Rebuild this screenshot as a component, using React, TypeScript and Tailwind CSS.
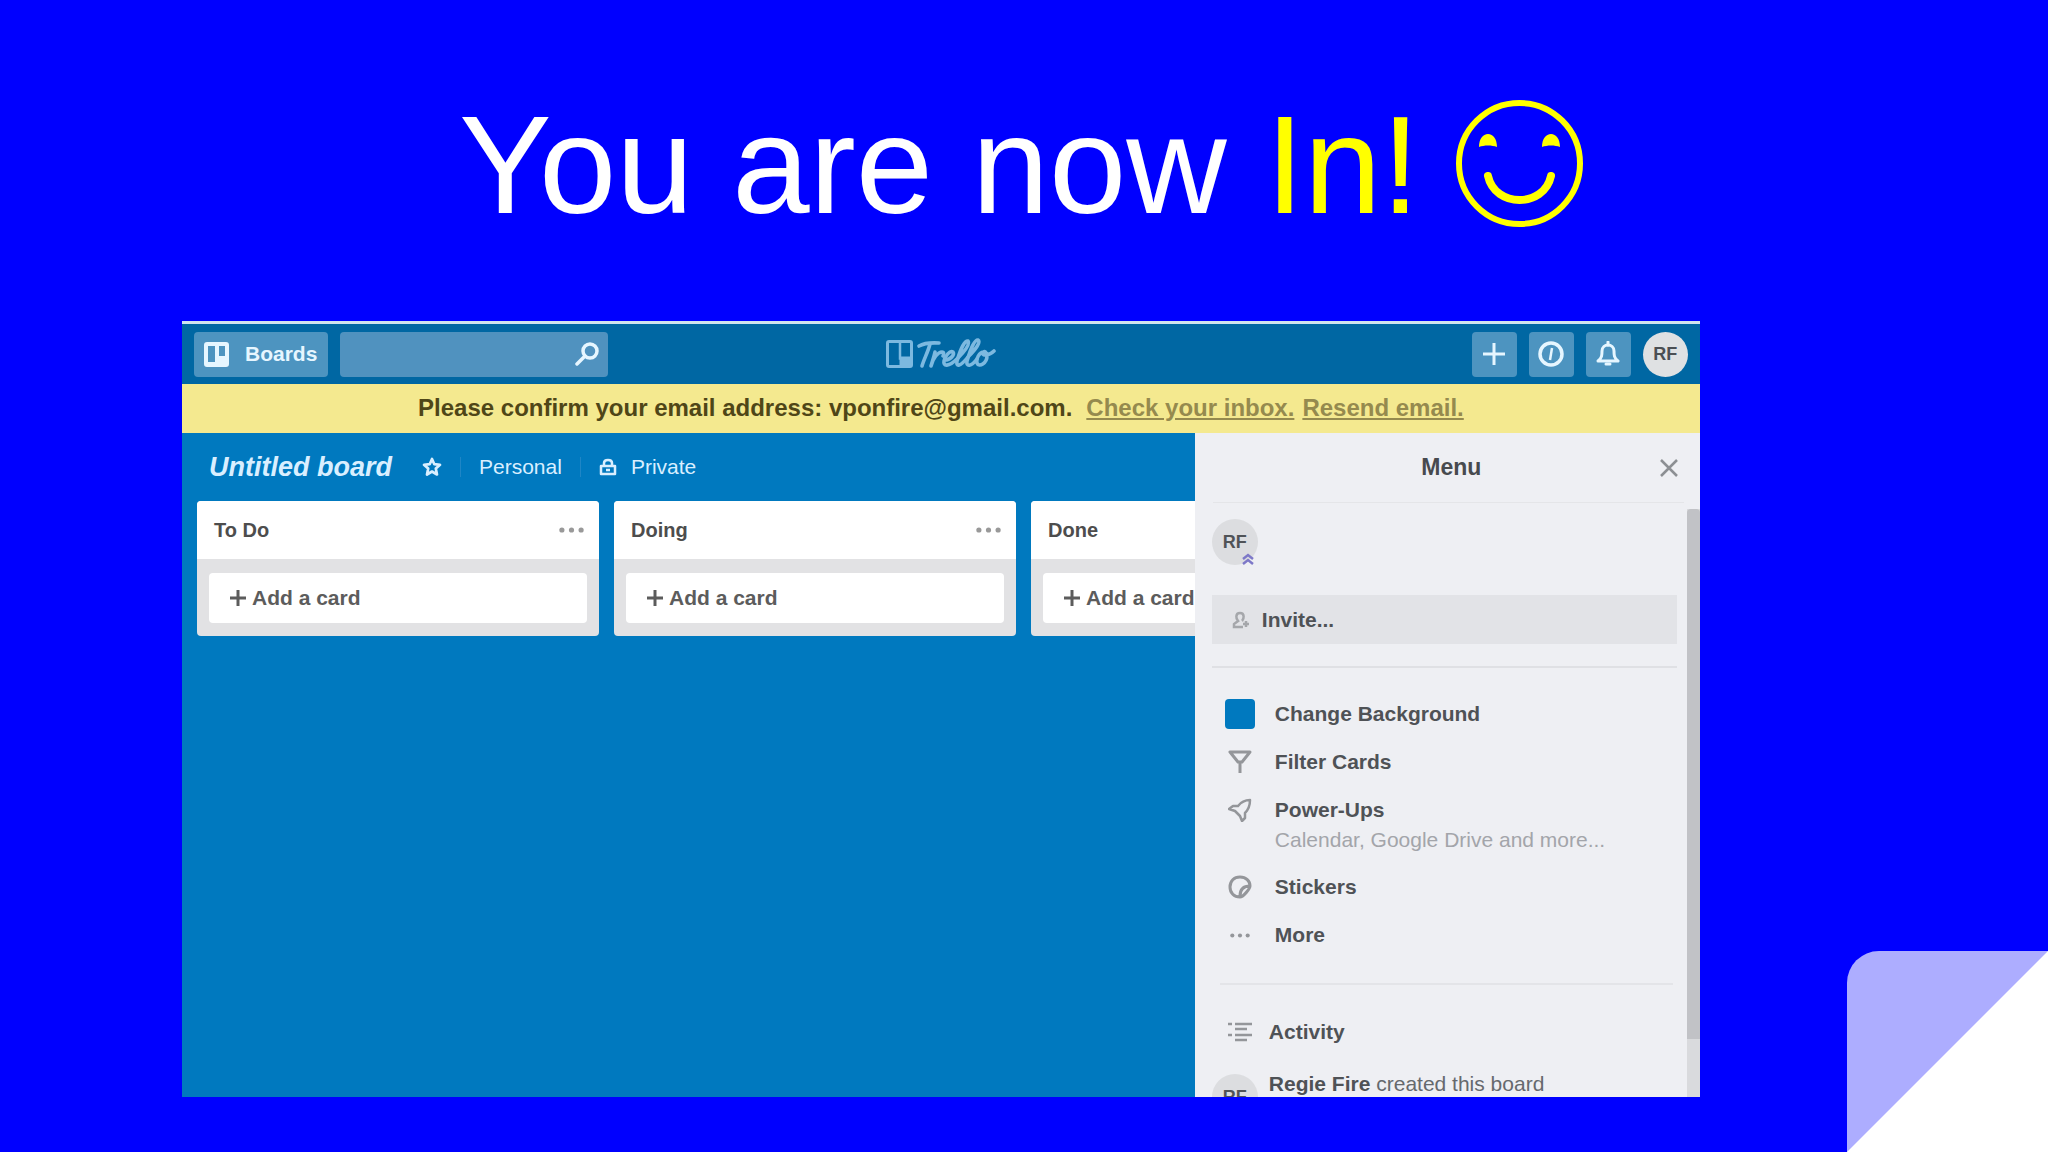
import type { ReactNode } from "react";

const LISTS = ["To Do", "Doing", "Done"];

function Dots({ className }: { className: string }) {
  return (
    <svg viewBox="0 0 26 6" className={className} fill="currentColor" aria-hidden="true">
      <circle cx="3" cy="3" r="2.700" />
      <circle cx="13" cy="3" r="2.700" />
      <circle cx="23" cy="3" r="2.700" />
    </svg>
  );
}

function BoardsIcon() {
  return (
    <svg viewBox="0 0 25 25" className="size-[25px]" aria-hidden="true">
      <path
        fill="currentColor"
        fillRule="evenodd"
        d="M3 0h19a3 3 0 0 1 3 3v19a3 3 0 0 1-3 3H3a3 3 0 0 1-3-3V3a3 3 0 0 1 3-3zM4 4v16h7V4zM15 4v10h6V4z"
      />
    </svg>
  );
}

function TrelloLogo() {
  return (
    <a href="#" aria-label="Trello" className="text-[#7cb9e0]">
      <svg viewBox="0 0 110 32" className="h-8 w-[110px]" fill="none" aria-hidden="true">
        <rect x="1.5" y="3.5" width="24" height="25" rx="1.5" stroke="currentColor" strokeWidth="3" />
        <path d="M14 3.500v17h11" stroke="currentColor" strokeWidth="2.500" />
        <path d="M13.500 18.500h12v10h-12z" fill="currentColor" />
        <g stroke="currentColor" strokeWidth="3.600" strokeLinecap="round" strokeLinejoin="round">
          <path d="M33 8C38 5 45 4.500 53 5" />
          <path d="M44 6C42 14 38 21 36 28" />
          <path d="M49 14C48 19 46 24 45 28C47 20 52 14 56 14C58 14 58 16 57 18" />
          <path d="M59 22C64 22 69 17 67 14C64 12 59 18 58 23C57 28 62 30 72 20" />
          <path d="M72 20C79 13 84 6 82 3C78 2 73 16 71 23C70 29 74 29 82 19" />
          <path d="M82 19C90 11 95 4 92 2C88 1 83 16 81 23C80 29 85 29 91 21" />
          <path d="M98 14C93 14 90 21 91 25C93 30 101 25 101 18C101 14 98 12 97 15C96 18 103 18 108 13" />
        </g>
      </svg>
    </a>
  );
}

function Star() {
  return (
    <svg viewBox="0 0 20 20" className="size-5" fill="none" stroke="currentColor" strokeWidth="2.700" strokeLinejoin="round" aria-hidden="true">
      <path d="M10 2l2.300 5.200 5.700.6-4.200 3.800 1.200 5.900-5-3-5 3 1.200-5.900L2 7.800l5.700-.6z" />
    </svg>
  );
}

function HeaderButton({ label, children }: { label: string; children: ReactNode }) {
  return (
    <button aria-label={label} className="flex size-[45px] items-center justify-center rounded bg-[#4d94c0] text-[#e6f6ff]">
      {children}
    </button>
  );
}

function TopBar() {
  return (
    <header className="grid h-[60px] shrink-0 grid-cols-[1fr_auto_1fr] items-center bg-[#0067a3] px-3">
      <div className="flex gap-3">
        <button className="flex h-[45px] w-[134px] items-center gap-4 rounded bg-[#4d94c0] pl-[10px] text-[21px] font-bold text-[#e6f6ff]">
          <BoardsIcon />
          Boards
        </button>
        <label className="flex h-[45px] w-[268px] items-center rounded bg-[#5092bf] pr-[9px] text-[#e6f6ff]">
          <input type="text" aria-label="Search" className="min-w-0 flex-1 bg-transparent px-3 text-[21px] outline-none" />
          <svg viewBox="0 0 24 24" className="size-6" fill="none" stroke="currentColor" strokeWidth="3.500" strokeLinecap="round" aria-hidden="true">
            <circle cx="15" cy="9" r="7" />
            <path d="M10 14l-8 8" />
          </svg>
        </label>
      </div>
      <TrelloLogo />
      <div className="flex justify-end gap-3">
        <HeaderButton label="Create">
          <svg viewBox="0 0 22 22" className="size-[22px]" stroke="currentColor" strokeWidth="3" aria-hidden="true">
            <path d="M11 0v22M0 11h22" />
          </svg>
        </HeaderButton>
        <HeaderButton label="Information">
          <svg viewBox="0 0 26 26" className="size-[26px]" fill="none" stroke="currentColor" aria-hidden="true">
            <circle cx="13" cy="13" r="11" strokeWidth="3.500" />
            <path d="M14 7l-2 12" strokeWidth="2.500" />
          </svg>
        </HeaderButton>
        <HeaderButton label="Notifications">
          <svg viewBox="0 0 24 26" className="h-[26px] w-6" fill="none" stroke="currentColor" strokeWidth="3" strokeLinejoin="round" aria-hidden="true">
            <path d="M2 20c4-3 4-6 4-10 0-4 3-6 6-6s6 2 6 6c0 4 0 7 4 10z" />
            <path d="M12 1v3M10 23h4" strokeLinecap="round" />
          </svg>
        </HeaderButton>
        <button className="size-[45px] rounded-full bg-[#dfe1e3] text-[18px] font-bold text-[#4b4f54]">RF</button>
      </div>
    </header>
  );
}

function BoardList({ name }: { name: string }) {
  return (
    <section className="w-[402px] shrink-0 overflow-hidden rounded bg-[#e2e2e4]">
      <div className="flex h-[58px] items-center justify-between bg-white pr-[15px] pl-[17px]">
        <h2 className="text-[20px] font-bold text-[#4d4d4d]">{name}</h2>
        <button aria-label={`${name} list actions`} className="text-[#999]">
          <Dots className="h-[6px] w-[25px]" />
        </button>
      </div>
      <div className="px-3 pt-[14px] pb-[13px]">
        <button className="flex h-[50px] w-full items-center gap-[6px] rounded-sm bg-white pl-[21px] text-[21px] font-bold text-[#5c5c5c]">
          <svg viewBox="0 0 16 16" className="size-4" stroke="currentColor" strokeWidth="3" aria-hidden="true">
            <path d="M8 0v16M0 8h16" />
          </svg>
          Add a card
        </button>
      </div>
    </section>
  );
}

function Board() {
  return (
    <main className="min-w-0 flex-1 overflow-hidden">
      <div className="flex h-[68px] items-center px-[27px] text-[21px] text-[#d9efff]">
        <h1 className="text-[27px] font-bold italic">Untitled board</h1>
        <button aria-label="Star board" className="ml-[30px]">
          <Star />
        </button>
        <span className="ml-[18px] h-5 w-px bg-[#1f86c6]" />
        <button className="ml-[18px]">Personal</button>
        <span className="ml-[18px] h-5 w-px bg-[#1f86c6]" />
        <button className="ml-[18px] flex items-center gap-[14px]">
          <svg viewBox="0 0 18 18" className="size-[18px]" fill="none" stroke="currentColor" strokeWidth="2.500" strokeLinejoin="round" aria-hidden="true">
            <path d="M2 8h14v8H2zM5 8V5c0-4 8-4 8 0v3M7 12h4" />
          </svg>
          Private
        </button>
      </div>
      <div className="flex gap-[15px] pl-[15px]">
        {LISTS.map((name) => (
          <BoardList key={name} name={name} />
        ))}
      </div>
    </main>
  );
}

function MenuRow({ icon, children }: { icon: ReactNode; children: ReactNode }) {
  return (
    <li>
      <button className="flex h-12 w-full items-center text-[21px] font-bold text-[#4f5256]">
        <span className="mr-[19px] flex w-8 justify-center text-[#94969a]">{icon}</span>
        {children}
      </button>
    </li>
  );
}

function Menu() {
  return (
    <aside className="flex w-[505px] shrink-0 flex-col overflow-hidden bg-[#eeeff3]">
      <div className="mr-4 ml-[18px] grid h-[70px] grid-cols-[30px_1fr_24px] items-center border-b border-[#e4e5e8]">
        <h2 className="col-start-2 text-center text-[23px] font-bold text-[#474a4e]">Menu</h2>
        <button aria-label="Close menu" className="text-[#8c8f93]">
          <svg viewBox="0 0 18 18" className="size-[18px]" stroke="currentColor" strokeWidth="2.500" aria-hidden="true">
            <path d="M1 1l16 16M17 1L1 17" />
          </svg>
        </button>
      </div>
      <div className="flex min-h-0 flex-1">
        <div className="min-w-0 flex-1 pt-4 pr-[10px] pl-[17px]">
          <div className="relative size-[46px]">
            <button className="size-[46px] rounded-full bg-[#dcdde0] text-[18px] font-bold text-[#505357]">RF</button>
            <svg viewBox="0 0 12 12" className="absolute right-1 bottom-0 size-3" fill="none" stroke="#7d78c8" strokeWidth="2.500" aria-hidden="true">
              <path d="M1 6l5-4 5 4M1 11l5-4 5 4" />
            </svg>
          </div>
          <button className="mt-[30px] flex h-[49px] w-full items-center gap-3 bg-[#e2e3e7] pl-5 text-[21px] font-bold text-[#4f5256]">
            <svg viewBox="0 0 18 18" className="size-[18px]" fill="none" stroke="#a5a7ab" strokeWidth="2.500" aria-hidden="true">
              <path d="M10 10c2-2 3-8-2-8s-4 6-2 8l-4 3v3h9M14 10v6M11 13h6" />
            </svg>
            Invite...
          </button>
          <hr className="mt-[22px] border-t-2 border-[#dfe0e4]" />
          <ul className="mt-[22px] pl-3">
            <MenuRow icon={<span className="size-[30px] rounded bg-[#0079bf]" />}>Change Background</MenuRow>
            <MenuRow
              icon={
                <svg viewBox="0 0 24 24" className="size-6" fill="none" stroke="currentColor" strokeWidth="3" strokeLinejoin="round" aria-hidden="true">
                  <path d="M2 2h20l-8 10H10zM12 11v12" />
                </svg>
              }
            >
              Filter Cards
            </MenuRow>
            <MenuRow
              icon={
                <svg viewBox="0 0 24 24" className="size-6" fill="none" stroke="currentColor" strokeWidth="2.500" strokeLinejoin="round" aria-hidden="true">
                  <path d="M22 2c-5 0-9 2-12 6l-5 0-4 3 6 2 5 5 2 5 3-3v-5c4-4 5-8 5-13z" />
                </svg>
              }
            >
              Power-Ups
            </MenuRow>
            <li className="-mt-2 h-[37px] pl-[51px] text-[21px] leading-7 text-[#a3a5aa]">Calendar, Google Drive and more...</li>
            <MenuRow
              icon={
                <svg viewBox="0 0 24 24" className="size-6" fill="none" stroke="currentColor" strokeWidth="3" strokeLinejoin="round" aria-hidden="true">
                  <path d="M12 22C6 22 2 18 2 12S6 2 12 2s10 4 10 9c0 3-7 11-10 11zM12 21c0-6 3-10 10-10" />
                </svg>
              }
            >
              Stickers
            </MenuRow>
            <MenuRow icon={<Dots className="h-[5px] w-5" />}>More</MenuRow>
          </ul>
          <hr className="mt-[24px] mr-1 ml-2 border-t-2 border-[#e3e4e8]" />
          <h3 className="mt-[23px] flex h-12 items-center pl-4 text-[21px] font-bold text-[#4f5256]">
            <svg viewBox="0 0 24 20" className="mr-[17px] h-5 w-6" stroke="#94969a" strokeWidth="2.500" aria-hidden="true">
              <path d="M0 2h4M7 2h17M7 7h12M0 13h4M7 13h17M7 18h12" />
            </svg>
            Activity
          </h3>
          <div className="mt-[18px] flex gap-[11px]">
            <span className="flex size-[46px] items-center justify-center rounded-full bg-[#dcdde0] text-[18px] font-bold text-[#505357]">RF</span>
            <p className="-mt-[2px] text-[21px] leading-6 text-[#66696d]">
              <b className="text-[#4f5256]">Regie Fire</b> created this board
            </p>
          </div>
        </div>
        <div className="mt-[6px] w-[13px] shrink-0 bg-[#d9dadd]">
          <div className="h-[530px] rounded-t bg-[#c1c2c6]" />
        </div>
      </div>
    </aside>
  );
}

export default function App() {
  return (
    <div className="relative min-h-screen overflow-hidden bg-[#0000ff] font-['Liberation_Sans',Arial,sans-serif]">
      <div className="flex items-end justify-center pt-[86px] pr-[6px] text-[139px] leading-[158px] text-white">
        <p className="whitespace-pre">
          You are now <span className="text-[#ffff00]">In!</span>
        </p>
        <svg viewBox="0 0 127 127" className="mb-[17px] ml-9 size-[127px] text-[#ffff00]" fill="currentColor" role="img" aria-label="Smiling face">
          <circle cx="63.500" cy="63.500" r="60.500" fill="none" stroke="currentColor" strokeWidth="6" />
          <path d="M23 47c0-8 4-13 9-13s9 5 9 13c-5-2-13-2-18 0zM86 47c0-8 4-13 9-13s9 5 9 13c-5-2-13-2-18 0z" />
          <path d="M32 76C39 108 88 108 95 76" fill="none" stroke="currentColor" strokeWidth="8" strokeLinecap="round" />
        </svg>
      </div>
      <div className="mt-[77px] mr-[17%] ml-[182px] flex h-[776px] flex-col overflow-hidden border-t-[3px] border-[#cfe3ee] bg-[#0079bf]">
        <TopBar />
        <div className="flex h-[49px] shrink-0 items-center justify-center bg-[#f4e98f] pb-[2px] text-[24px] font-bold text-[#4f4617]">
          <span>Please confirm your email address: vponfire@gmail.com.</span>
          <a href="#" className="ml-[14px] text-[#958a4e] underline">Check your inbox.</a>
          <a href="#" className="ml-2 text-[#958a4e] underline">Resend email.</a>
        </div>
        <div className="flex min-h-0 flex-1">
          <Board />
          <Menu />
        </div>
      </div>
      <svg viewBox="0 0 201 201" className="absolute right-0 bottom-0 size-[201px]" aria-hidden="true">
        <path d="M0 201V32A32 32 0 0 1 32 0H201V201z" fill="#adadff" />
        <path d="M201 0V201H0z" fill="#fff" />
      </svg>
    </div>
  );
}
